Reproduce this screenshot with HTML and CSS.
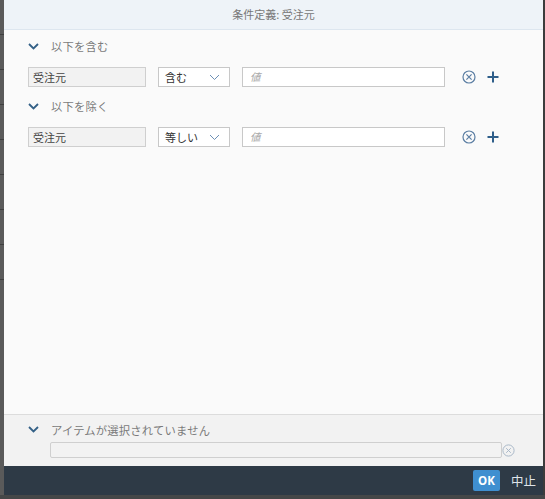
FILE: index.html
```html
<!DOCTYPE html>
<html lang="ja">
<head>
<meta charset="utf-8">
<link rel="stylesheet" href="styles.css">
</head>
<body>
<div class="screen">
  <div class="backdrop-left">
    <span></span><span></span><span></span><span></span><span></span><span></span><span></span><span></span>
  </div>
  <div class="dialog">
    <div class="header">条件定義: 受注元</div>
    <div class="content">
      <div class="section-title">
        <svg class="chev" width="11" height="7" viewBox="0 0 11 7"><path d="M1 1 L5.5 5.5 L10 1" fill="none" stroke="#346187" stroke-width="1.8"/></svg>
        <span>以下を含む</span>
      </div>
      <div class="row">
        <div class="field">受注元</div>
        <div class="select"><span>含む</span><svg width="11" height="7" viewBox="0 0 11 7"><path d="M1 1 L5.5 5.5 L10 1" fill="none" stroke="#6c8fb5" stroke-width="1"/></svg></div>
        <div class="input">値</div>
        <svg class="clear" width="14" height="14" viewBox="0 0 14 14"><circle cx="7" cy="7" r="6" fill="none" stroke="#5b7ea3" stroke-width="1.2"/><path d="M4.4 4.4 L9.6 9.6 M9.6 4.4 L4.4 9.6" stroke="#5b7ea3" stroke-width="1.2"/></svg>
        <svg class="plus" width="12" height="12" viewBox="0 0 12 12"><path d="M6 0.5 V11.5 M0.5 6 H11.5" stroke="#2f5f8a" stroke-width="2"/></svg>
      </div>
      <div class="section-title second">
        <svg class="chev" width="11" height="7" viewBox="0 0 11 7"><path d="M1 1 L5.5 5.5 L10 1" fill="none" stroke="#346187" stroke-width="1.8"/></svg>
        <span>以下を除く</span>
      </div>
      <div class="row">
        <div class="field">受注元</div>
        <div class="select"><span>等しい</span><svg width="11" height="7" viewBox="0 0 11 7"><path d="M1 1 L5.5 5.5 L10 1" fill="none" stroke="#6c8fb5" stroke-width="1"/></svg></div>
        <div class="input">値</div>
        <svg class="clear" width="14" height="14" viewBox="0 0 14 14"><circle cx="7" cy="7" r="6" fill="none" stroke="#5b7ea3" stroke-width="1.2"/><path d="M4.4 4.4 L9.6 9.6 M9.6 4.4 L4.4 9.6" stroke="#5b7ea3" stroke-width="1.2"/></svg>
        <svg class="plus" width="12" height="12" viewBox="0 0 12 12"><path d="M6 0.5 V11.5 M0.5 6 H11.5" stroke="#2f5f8a" stroke-width="2"/></svg>
      </div>
    </div>
    <div class="selected">
      <div class="section-title">
        <svg class="chev" width="11" height="7" viewBox="0 0 11 7"><path d="M1 1 L5.5 5.5 L10 1" fill="none" stroke="#346187" stroke-width="1.8"/></svg>
        <span>アイテムが選択されていません</span>
      </div>
      <div class="sel-row">
        <div class="sel-input"></div>
        <svg class="clear-light" width="13" height="13" viewBox="0 0 13 13"><circle cx="6.5" cy="6.5" r="5.6" fill="none" stroke="#a9b8c8" stroke-width="1"/><path d="M4.2 4.2 L8.8 8.8 M8.8 4.2 L4.2 8.8" stroke="#a9b8c8" stroke-width="1"/></svg>
      </div>
    </div>
    <div class="footer">
      <button class="ok">OK</button>
      <button class="cancel">中止</button>
    </div>
  </div>
  <div class="backdrop-right"></div>
</div>
<div class="backdrop-bottom"></div>
</body>
</html>
```

FILE: styles.css
```css
html, body {
  margin: 0;
  padding: 0;
  background: #4f5153;
  font-family: "Noto Sans CJK JP", "Noto Sans", sans-serif;
  overflow: hidden;
}
.screen {
  display: flex;
  width: 545px;
  height: 495px;
}
.backdrop-left {
  width: 4px;
  background: #5a5a5a;
  display: flex;
  flex-direction: column;
}
.backdrop-left span {
  display: block;
  height: 34px;
  border-bottom: 1px solid #3f3f3f;
}
.backdrop-right {
  width: 2px;
  background: #3c3c3c;
}
.backdrop-bottom {
  height: 4px;
  background: #454748;
}
.dialog {
  width: 539px;
  height: 495px;
  display: flex;
  flex-direction: column;
  background: #fafafa;
}
.header {
  height: 29px;
  line-height: 29px;
  background: #eef3f8;
  border-bottom: 1px solid #dde6ef;
  text-align: center;
  font-size: 11px;
  color: #777;
}
.content {
  flex: 1;
  padding: 8px 0 0 24px;
}
.section-title {
  display: flex;
  align-items: center;
  height: 16px;
  font-size: 11.3px;
  letter-spacing: 0.2px;
  color: #7a7a7a;
}
.section-title .chev {
  margin-right: 12px;
}
.section-title.second {
  margin-top: 11px;
}
.row {
  display: flex;
  align-items: center;
  margin-top: 13px;
  height: 20px;
}
.field {
  width: 112px;
  height: 18px;
  border: 1px solid #cfcfcf;
  background: #f2f2f2;
  font-size: 11px;
  line-height: 18px;
  padding-left: 4px;
  color: #444;
}
.select {
  margin-left: 12px;
  width: 72px;
  height: 20px;
  border: 1px solid #c8c8c8;
  background: #fff;
  display: flex;
  align-items: center;
  justify-content: space-between;
  font-size: 11px;
  color: #333;
  padding: 0 9px 0 6px;
  box-sizing: border-box;
}
.input {
  margin-left: 12px;
  width: 203px;
  height: 20px;
  box-sizing: border-box;
  border: 1px solid #c8c8c8;
  background: #fff;
  font-size: 10.5px;
  font-style: italic;
  color: #a8a8a8;
  line-height: 18px;
  padding-left: 7px;
}
.clear {
  margin-left: 17px;
}
.plus {
  margin-left: 11px;
}
.selected {
  border-top: 1px solid #dcdcdc;
  background: #f2f2f2;
  padding: 7px 0 0 24px;
  box-sizing: border-box;
  height: 52px;
}
.selected .section-title {
  height: 15px;
}
.sel-row {
  display: flex;
  align-items: center;
  margin-top: 5px;
  padding-left: 22px;
}
.sel-input {
  width: 452px;
  height: 16px;
  box-sizing: border-box;
  border: 1px solid #cfcfcf;
  border-radius: 2px;
  background: #f2f2f2;
}
.footer {
  height: 29px;
  background: #2e3a46;
  display: flex;
  align-items: center;
  justify-content: flex-end;
  padding-right: 7px;
}
.ok {
  border: none;
  background: #3f8fd0;
  color: #fff;
  font-family: "Open Sans", "Liberation Sans", sans-serif;
  font-weight: bold;
  font-size: 11.5px;
  width: 27px;
  height: 21px;
  padding: 0;
  border-radius: 2px;
}
.cancel {
  border: none;
  background: transparent;
  color: #dfe4e9;
  font-family: "Noto Sans CJK JP", sans-serif;
  font-size: 12.5px;
  padding: 0;
  margin-left: 11px;
}
```
